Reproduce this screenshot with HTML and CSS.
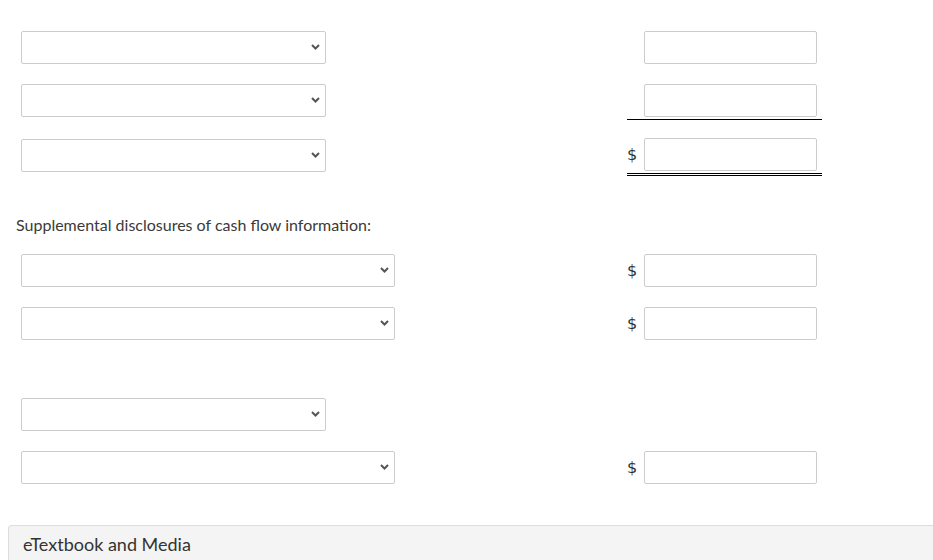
FILE: index.html
```html
<!DOCTYPE html>
<html>
<head>
<meta charset="utf-8">
<link rel="stylesheet" href="styles.css">
</head>
<body>
<div class="sheet">
  <div class="row r1">
    <div class="sel short"><select></select><svg class="chev" width="9" height="6" viewBox="0 0 9 6"><path d="M1 1 L4.5 4.5 L8 1" fill="none" stroke="#555" stroke-width="2"/></svg></div>
    <div class="amt"><span class="cur"></span><input type="text"></div>
  </div>
  <div class="row r2">
    <div class="sel short"><select></select><svg class="chev" width="9" height="6" viewBox="0 0 9 6"><path d="M1 1 L4.5 4.5 L8 1" fill="none" stroke="#555" stroke-width="2"/></svg></div>
    <div class="amt single"><span class="cur"></span><input type="text"></div>
  </div>
  <div class="row r3">
    <div class="sel short"><select></select><svg class="chev" width="9" height="6" viewBox="0 0 9 6"><path d="M1 1 L4.5 4.5 L8 1" fill="none" stroke="#555" stroke-width="2"/></svg></div>
    <div class="amt double"><span class="cur">$</span><input type="text"></div>
  </div>
  <p class="label">Supplemental disclosures of cash flow information:</p>
  <div class="row r4">
    <div class="sel wide"><select></select><svg class="chev" width="9" height="6" viewBox="0 0 9 6"><path d="M1 1 L4.5 4.5 L8 1" fill="none" stroke="#555" stroke-width="2"/></svg></div>
    <div class="amt"><span class="cur">$</span><input type="text"></div>
  </div>
  <div class="row r5">
    <div class="sel wide"><select></select><svg class="chev" width="9" height="6" viewBox="0 0 9 6"><path d="M1 1 L4.5 4.5 L8 1" fill="none" stroke="#555" stroke-width="2"/></svg></div>
    <div class="amt"><span class="cur">$</span><input type="text"></div>
  </div>
  <div class="row r6">
    <div class="sel short"><select></select><svg class="chev" width="9" height="6" viewBox="0 0 9 6"><path d="M1 1 L4.5 4.5 L8 1" fill="none" stroke="#555" stroke-width="2"/></svg></div>
  </div>
  <div class="row r7">
    <div class="sel wide"><select></select><svg class="chev" width="9" height="6" viewBox="0 0 9 6"><path d="M1 1 L4.5 4.5 L8 1" fill="none" stroke="#555" stroke-width="2"/></svg></div>
    <div class="amt"><span class="cur">$</span><input type="text"></div>
  </div>
</div>
<div class="footer">eTextbook and Media</div>
</body>
</html>
```
FILE: styles.css
```css
html, body {
  margin: 0;
  padding: 0;
  background: #fff;
  font-family: Lato, "Liberation Sans", sans-serif;
  color: #333;
  overflow: hidden;
}
.sheet {
  padding: 31px 0 0 21px;
  height: 525px;
  box-sizing: border-box;
}
.row {
  display: grid;
  grid-template-columns: 606px 195px;
  align-items: start;
  height: 33px;
}
.r2 { margin-top: 20px; }
.r3 { margin-top: 22px; }
.r4 { margin-top: 0; }
.r5 { margin-top: 20px; }
.r6 { margin-top: 58px; }
.r7 { margin-top: 20px; }
.sel {
  position: relative;
  height: 33px;
}
.sel.short { width: 305px; }
.sel.wide { width: 374px; }
.sel select {
  appearance: none;
  -webkit-appearance: none;
  width: 100%;
  height: 33px;
  margin: 0;
  border: 1px solid #ccc;
  border-radius: 2px;
  background: #fff;
  box-sizing: border-box;
}
.chev {
  position: absolute;
  right: 6px;
  top: 13px;
}
.amt {
  display: flex;
  align-items: center;
  grid-column: 2;
  width: 195px;
}
.cur {
  width: 17px;
  font-family: "DejaVu Sans", sans-serif;
  font-size: 16px;
  color: #333;
  padding-left: 0;
  box-sizing: border-box;
}
.amt input {
  width: 173px;
  height: 33px;
  margin: 0;
  border: 1px solid #ccc;
  border-radius: 2px;
  box-sizing: border-box;
  background: #fff;
}
.amt.single {
  padding-bottom: 2px;
  border-bottom: 1px solid #000;
}
.amt.double {
  padding-bottom: 2px;
  border-bottom: 3px double #000;
  margin-top: -1px;
}
.label {
  margin: 43px 0 19px -5px;
  font-size: 16px;
  line-height: 20px;
  color: #3a3a3a;
}
.footer {
  margin-left: 8px;
  height: 35px;
  box-sizing: border-box;
  background: #f4f4f4;
  border-top: 1px solid #ddd;
  border-left: 1px solid #ddd;
  border-top-left-radius: 4px;
  padding: 7px 0 0 14px;
  font-size: 18px;
  line-height: 22px;
  color: #333;
}
```
